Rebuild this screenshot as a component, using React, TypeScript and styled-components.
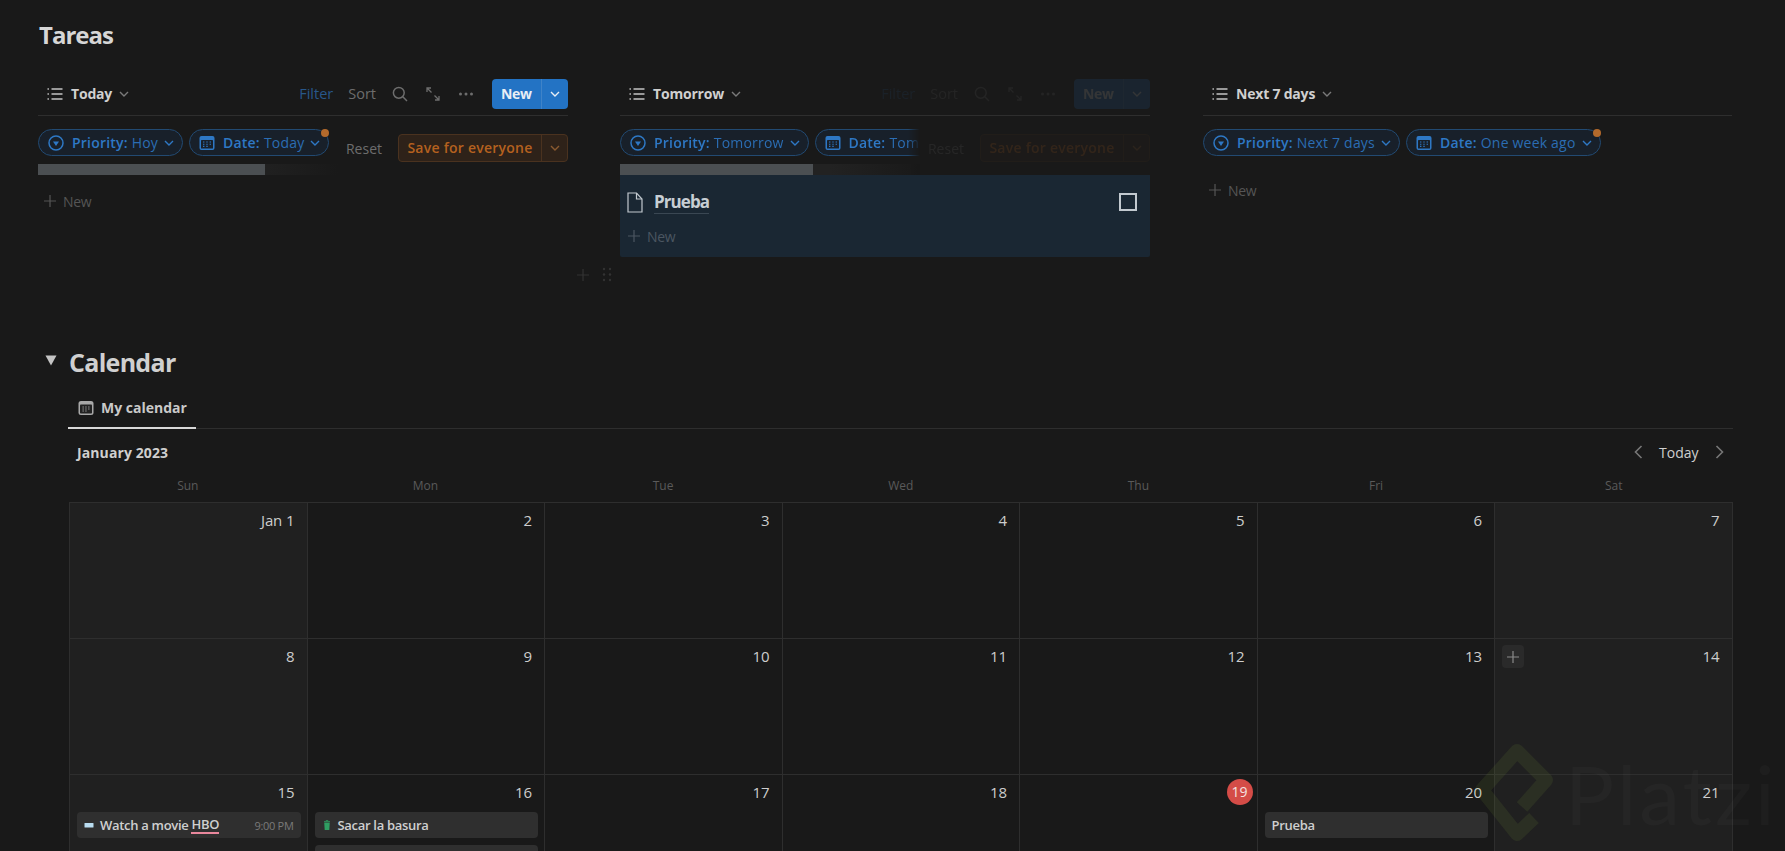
import React from 'react';
import styled, { createGlobalStyle } from 'styled-components';

const GlobalStyle = createGlobalStyle`
  html, body {
    margin: 0;
    padding: 0;
    height: 851px;
    overflow: hidden;
    background: #191919;
    color: #d4d4d4;
    font-family: "Open Sans", "Noto Sans", "Liberation Sans", sans-serif;
  }
  * { box-sizing: border-box; }
`;

const Page = styled.div`
  position: relative;
  width: 1785px;
  height: 851px;
  overflow: hidden;
  padding: 0 51px 0 38px;
`;

const Title = styled.h1`
  margin: 0 0 0 1px;
  height: 79px;
  padding-top: 18px;
  font-size: 24px;
  line-height: 34px;
  font-weight: 700;
  letter-spacing: -1px;
  color: #d6d6d6;
`;

// ---- list views ----

const Columns = styled.div`
  position: relative;
  display: grid;
  grid-template-columns: repeat(3, 530px);
  column-gap: 52px;
  height: 263px;
`;

const Column = styled.section`
  min-width: 0;

  &:nth-child(3) {
    margin-left: 1px;
  }
`;

const ViewBar = styled.div`
  display: flex;
  align-items: center;
  height: 37px;
  padding: 0 0 7px 9px;
  border-bottom: 1px solid #2e2e2e;
`;

const ViewName = styled.span`
  margin-left: 8px;
  font-size: 14px;
  font-weight: 700;
  letter-spacing: -0.2px;
  color: #d0d0d0;
`;

const ViewChevron = styled.svg`
  margin-left: 7px;
  width: 10px;
  height: 6px;
`;

const Tools = styled.div<{ $faded?: boolean }>`
  margin-left: auto;
  display: flex;
  align-items: center;
  opacity: ${p => (p.$faded ? 0.13 : 1)};
`;

const ToolText = styled.span<{ $blue?: boolean }>`
  font-size: 14.5px;
  margin-right: ${p => (p.$blue ? 15 : 16)}px;
  color: ${p => (p.$blue ? '#28578a' : '#6d6d6d')};
`;

const ToolIcon = styled.svg`
  width: 16px;
  height: 16px;
  margin-right: 17px;
  flex: none;
`;

const SplitButton = styled.div`
  display: flex;
  width: 76px;
  height: 30px;
  margin-left: 1px;
  border-radius: 4px;
  background: #2373c4;
  overflow: hidden;
`;

const SplitLabel = styled.span`
  width: 49.5px;
  text-align: center;
  line-height: 30px;
  font-size: 14px;
  font-weight: 700;
  letter-spacing: -0.3px;
  color: #e8eef5;
  border-right: 1px solid #3f83c8;
`;

const SplitArrow = styled.span`
  flex: 1;
  display: flex;
  align-items: center;
  justify-content: center;
`;

const FilterRow = styled.div`
  display: flex;
  align-items: flex-start;
  height: 59px;
`;

const FilterBlock = styled.div<{ $clip?: boolean }>`
  position: relative;
  width: ${p => (p.$clip ? '300px' : 'auto')};
  flex: none;
  ${p =>
    p.$clip
      ? 'overflow: hidden; mask-image: linear-gradient(90deg, #000 96%, transparent);'
      : ''}
`;

const Chips = styled.div`
  display: flex;
  gap: 6px;
  height: 48px;
  padding-top: 13px;
  white-space: nowrap;
`;

const Chip = styled.span`
  position: relative;
  display: inline-flex;
  align-items: center;
  flex: none;
  height: 27px;
  padding: 0 8px 0 9px;
  border: 1px solid #224a72;
  border-radius: 14px;
  background: #18202a;
  font-size: 14px;
  letter-spacing: 0.2px;
  color: #2b6db3;
`;

const ChipIcon = styled.svg`
  width: 16px;
  height: 16px;
  margin-right: 8px;
  flex: none;
`;

const ChipKey = styled.b`
  font-weight: 600;
  margin-right: 4px;
  color: #2e78c5;
`;

const ChipChevron = styled.svg`
  width: 10px;
  height: 6px;
  margin-left: 6px;
  flex: none;
`;

const Dot = styled.i`
  position: absolute;
  top: -1px;
  right: -1px;
  width: 8px;
  height: 8px;
  border-radius: 50%;
  background: #b36a2c;
`;

const Track = styled.div`
  width: 300px;
  height: 11px;
  background: linear-gradient(90deg, #222 70%, #191919);
`;

const Thumb = styled.div`
  height: 100%;
  background: #4b4f52;
`;

const Overlay = styled.div<{ $faded?: boolean }>`
  margin-left: auto;
  margin-top: 18px;
  display: flex;
  align-items: center;
  opacity: ${p => (p.$faded ? 0.16 : 1)};
`;

const ResetLabel = styled.span`
  font-size: 14px;
  color: #6d6d6d;
  margin-right: 16px;
`;

const SaveButton = styled.div`
  display: flex;
  width: 170px;
  height: 28px;
  border: 1px solid #4a321f;
  border-radius: 4px;
  background: #2e2219;
  color: #b5611f;
`;

const SaveLabel = styled.span`
  width: 143px;
  text-align: center;
  line-height: 26px;
  font-size: 14px;
  font-weight: 600;
  letter-spacing: 0.25px;
  border-right: 1px solid #4a321f;
  white-space: nowrap;
`;

const NewRow = styled.div<{ $top: number }>`
  display: flex;
  align-items: center;
  height: 30px;
  margin-top: ${p => p.$top}px;
  padding-left: 5px;
  font-size: 14px;
  letter-spacing: -0.3px;
  color: #555;
`;

const NewPlus = styled.svg`
  width: 14px;
  height: 14px;
  margin-right: 6px;
`;

const GroupPanel = styled.div`
  height: 82px;
  background: #1a2733;
  border-radius: 0 0 2px 2px;
`;

const RowItem = styled.div`
  display: flex;
  align-items: center;
  height: 47px;
  padding: 7px 13px 0 7px;
`;

const DocIcon = styled.svg`
  width: 16px;
  height: 21px;
  margin-right: 11px;
`;

const RowTitle = styled.span`
  font-size: 17px;
  font-weight: 700;
  letter-spacing: -0.9px;
  color: #c7ced4;
  border-bottom: 1px solid #3a4753;
  line-height: 22px;
`;

const CheckBox = styled.span`
  margin-left: auto;
  width: 18px;
  height: 18px;
  border: 2px solid #c2c9cf;
`;

const PanelNew = styled(NewRow)`
  padding-left: 7px;
  height: 26px;
  color: #4b5661;
`;

const BlockTools = styled.div`
  position: absolute;
  left: 538px;
  top: 188px;
  display: flex;
  align-items: center;
  gap: 12px;
`;

// ---- calendar ----

const Heading = styled.div`
  display: flex;
  align-items: center;
  height: 40px;
  padding-left: 7px;
`;

const Triangle = styled.svg`
  width: 12px;
  height: 11px;
  margin-right: 12px;
  margin-top: -3px;
`;

const HeadingText = styled.h2`
  margin: 0;
  font-size: 25px;
  font-weight: 700;
  letter-spacing: -0.7px;
  color: #d0d0d0;
`;

const CalendarBody = styled.div`
  width: 1663.5px;
  margin-left: 31px;
`;

const Tabs = styled.div`
  height: 47px;
  border-bottom: 1px solid #2e2e2e;
`;

const Tab = styled.div`
  display: inline-flex;
  align-items: center;
  height: 47px;
  width: 128px;
  margin-left: -1px;
  padding: 6px 0 0 10px;
  border-bottom: 2px solid #d8d8d8;
  font-size: 14px;
  font-weight: 700;
  color: #c9c9c9;
`;

const TabIcon = styled.svg`
  width: 16px;
  height: 16px;
  margin-right: 7px;
`;

const MonthBar = styled.div`
  display: flex;
  align-items: center;
  height: 46px;
  padding-left: 8px;
`;

const MonthName = styled.span`
  font-size: 14px;
  font-weight: 700;
  letter-spacing: 0.1px;
  color: #cfcfcf;
`;

const MonthNav = styled.div`
  margin-left: auto;
  display: flex;
  align-items: center;
  gap: 16px;
  padding-right: 9px;
  font-size: 14px;
  color: #cfcfcf;
`;

const NavArrow = styled.svg`
  width: 9px;
  height: 14px;
`;

const WeekRow = styled.div`
  display: grid;
  grid-template-columns: repeat(7, 1fr);
  height: 27px;
  padding-top: 1px;
  line-height: 20px;
  font-size: 12px;
  text-align: center;
  color: #5a5a5a;
`;

const MonthGrid = styled.div`
  display: grid;
  grid-template-columns: repeat(7, 1fr);
  grid-auto-rows: 136px;
  border-top: 1px solid #2e2e2e;
  border-left: 1px solid #2e2e2e;
`;

const DayCell = styled.div<{ $weekend: boolean }>`
  position: relative;
  min-width: 0;
  padding: 0 6px 0 7px;
  border-right: 1px solid #2e2e2e;
  border-bottom: 1px solid #2e2e2e;
  background: ${p => (p.$weekend ? '#202020' : '#191919')};
`;

const DayNumber = styled.div`
  display: flex;
  align-items: center;
  justify-content: flex-end;
  height: 34px;
  margin-bottom: 3px;
  padding-right: 6px;
  font-size: 15px;
  letter-spacing: -0.1px;
  color: #cdcdcd;
`;

const TodayBadge = styled.span`
  width: 26px;
  height: 26px;
  margin-right: -8px;
  border-radius: 50%;
  background: #d44c47;
  color: #f4e3e2;
  font-size: 14px;
  line-height: 26px;
  text-align: center;
`;

const AddButton = styled.span`
  position: absolute;
  top: 6px;
  left: 7px;
  display: flex;
  align-items: center;
  justify-content: center;
  width: 22px;
  height: 23px;
  border-radius: 4px;
  background: #2a2a2a;
`;

const EventCard = styled.div`
  display: flex;
  align-items: center;
  height: 26px;
  margin-bottom: 7px;
  padding: 0 7px;
  border-radius: 4px;
  background: #2f2f2f;
  font-size: 13px;
  font-weight: 600;
  letter-spacing: -0.3px;
  color: #cfcfcf;
  white-space: nowrap;
`;

const EventIcon = styled.svg`
  width: 10px;
  height: 12px;
  margin-right: 6px;
  flex: none;
`;

const Mention = styled.span`
  margin-left: 3px;
  border-bottom: 2px solid #e8879c;
  line-height: 15px;
`;

const EventTime = styled.span`
  margin-left: auto;
  font-size: 11px;
  font-weight: 400;
  color: #7a7a7a;
`;

// ---- watermark ----

const Watermark = styled.div`
  position: absolute;
  left: 1475px;
  top: 743px;
  display: flex;
  pointer-events: none;
`;

const WatermarkLogo = styled.svg`
  width: 78px;
  height: 100px;
  flex: none;
`;

const WatermarkText = styled.span`
  margin-left: 12px;
  font-size: 82px;
  line-height: 100px;
  font-family: "Lato", "Open Sans", sans-serif;
  font-weight: 400;
  letter-spacing: 3px;
  color: rgba(255, 255, 255, 0.022);
`;

// ---- icons ----

const ListGlyph = () => (
  <svg width="16" height="14" viewBox="0 0 16 14" fill="none" stroke="#c4c4c4" strokeWidth="1.3">
    <path d="M4.5 2h11M4.5 7h11M4.5 12h11" />
    <path d="M.5 2h1.4M.5 7h1.4M.5 12h1.4" strokeWidth="1.6" />
  </svg>
);

const Chevron = ({ color = '#7a7a7a' }: { color?: string }) => (
  <path d="M1 1l4 4 4-4" fill="none" stroke={color} strokeWidth="1.4" />
);

const PriorityGlyph = () => (
  <ChipIcon viewBox="0 0 16 16">
    <circle cx="8" cy="8" r="7" fill="none" stroke="#2e78c5" strokeWidth="1.5" />
    <path d="M5 6.5h6L8 11z" fill="#2e78c5" />
  </ChipIcon>
);

const CalendarGlyph = () => (
  <ChipIcon viewBox="0 0 16 16">
    <rect x="0.5" y="1" width="15" height="14" rx="2" fill="#2e78c5" />
    <rect x="2" y="5" width="12" height="8.5" rx="0.6" fill="#18202a" />
    <path d="M4 7h1.4M7.3 7h1.4M10.6 7h1.4M4 9.2h1.4M7.3 9.2h1.4M10.6 9.2h1.4M7.3 11.4h1.4M4 11.4h1.4" stroke="#2e78c5" strokeWidth="1.1" />
  </ChipIcon>
);

const PlusGlyph = ({ color }: { color: string }) => (
  <path d="M7 1v12M1 7h12" stroke={color} strokeWidth="1.2" fill="none" />
);

const toolColor = '#6d6d6d';

type Chip = { key: string; value: string; icon: 'priority' | 'date'; dot?: boolean };

type View = {
  name: string;
  chips: Chip[];
  fadedTools?: boolean;
  save?: 'on' | 'faded';
  thumb?: number;
  clip?: boolean;
};

const views: View[] = [
  {
    name: 'Today',
    chips: [
      { key: 'Priority:', value: 'Hoy', icon: 'priority' },
      { key: 'Date:', value: 'Today', icon: 'date', dot: true },
    ],
    save: 'on',
    thumb: 227,
  },
  {
    name: 'Tomorrow',
    chips: [
      { key: 'Priority:', value: 'Tomorrow', icon: 'priority' },
      { key: 'Date:', value: 'Tomorrow', icon: 'date' },
    ],
    fadedTools: true,
    save: 'faded',
    thumb: 193,
    clip: true,
  },
  {
    name: 'Next 7 days',
    chips: [
      { key: 'Priority:', value: 'Next 7 days', icon: 'priority' },
      { key: 'Date:', value: 'One week ago', icon: 'date', dot: true },
    ],
  },
];

const ViewColumn: React.FC<{ view: View }> = ({ view }) => (
  <Column>
    <ViewBar>
      <ListGlyph />
      <ViewName>{view.name}</ViewName>
      <ViewChevron viewBox="0 0 10 6"><Chevron /></ViewChevron>
      {view.save && (
        <Tools $faded={view.fadedTools}>
          <ToolText $blue>Filter</ToolText>
          <ToolText>Sort</ToolText>
          <ToolIcon viewBox="0 0 16 16" fill="none" stroke={toolColor} strokeWidth="1.5">
            <circle cx="6.8" cy="6.8" r="5.4" />
            <path d="M10.8 10.8l4.2 4.2" />
          </ToolIcon>
          <ToolIcon viewBox="0 0 16 16" fill="none" stroke={toolColor} strokeWidth="1.3">
            <path d="M2 2l4.5 4.5M2 6V2h4M14 14L9.5 9.5M14 10v4h-4" />
          </ToolIcon>
          <ToolIcon viewBox="0 0 16 16" fill={toolColor}>
            <circle cx="2.5" cy="8" r="1.5" />
            <circle cx="8" cy="8" r="1.5" />
            <circle cx="13.5" cy="8" r="1.5" />
          </ToolIcon>
          <SplitButton>
            <SplitLabel>New</SplitLabel>
            <SplitArrow>
              <svg width="10" height="6" viewBox="0 0 10 6"><Chevron color="#e8eef5" /></svg>
            </SplitArrow>
          </SplitButton>
        </Tools>
      )}
    </ViewBar>
    <FilterRow>
      <FilterBlock $clip={view.clip}>
        <Chips>
          {view.chips.map(chip => (
            <Chip key={chip.key}>
              {chip.icon === 'priority' ? <PriorityGlyph /> : <CalendarGlyph />}
              <ChipKey>{chip.key}</ChipKey>
              {chip.value}
              <ChipChevron viewBox="0 0 10 6"><Chevron color="#2e78c5" /></ChipChevron>
              {chip.dot && <Dot />}
            </Chip>
          ))}
        </Chips>
        {view.thumb && (
          <Track>
            <Thumb style={{ width: view.thumb }} />
          </Track>
        )}
      </FilterBlock>
      {view.save && (
        <Overlay $faded={view.save === 'faded'}>
          <ResetLabel>Reset</ResetLabel>
          <SaveButton>
            <SaveLabel>Save for everyone</SaveLabel>
            <SplitArrow>
              <svg width="10" height="6" viewBox="0 0 10 6"><Chevron color="#8a5a30" /></svg>
            </SplitArrow>
          </SaveButton>
        </Overlay>
      )}
    </FilterRow>
    {view.clip ? (
      <GroupPanel>
        <RowItem>
          <DocIcon viewBox="0 0 16 21" fill="none" stroke="#c2c9cf" strokeWidth="1.2">
            <path d="M1 1h8.5L15 7v13H1z" />
            <path d="M9.5 1v6H15" />
          </DocIcon>
          <RowTitle>Prueba</RowTitle>
          <CheckBox />
        </RowItem>
        <PanelNew $top={1}>
          <NewPlus viewBox="0 0 14 14"><PlusGlyph color="#4b5661" /></NewPlus>
          New
        </PanelNew>
      </GroupPanel>
    ) : (
      <NewRow $top={view.thumb ? 11 : 0}>
        <NewPlus viewBox="0 0 14 14"><PlusGlyph color="#555" /></NewPlus>
        New
      </NewRow>
    )}
  </Column>
);

type CalEvent = { title?: string; mention?: string; time?: string; icon?: 'ticket' | 'trash' };

const events: Record<number, CalEvent[]> = {
  15: [{ title: 'Watch a movie', mention: 'HBO', time: '9:00 PM', icon: 'ticket' }],
  16: [{ title: 'Sacar la basura', icon: 'trash' }, {}],
  20: [{ title: 'Prueba' }],
};

const weekdays = ['Sun', 'Mon', 'Tue', 'Wed', 'Thu', 'Fri', 'Sat'];
const days = Array.from({ length: 21 }, (_, i) => i + 1);

const EventItem: React.FC<{ event: CalEvent }> = ({ event }) => (
  <EventCard>
    {event.icon === 'ticket' && (
      <EventIcon viewBox="0 0 10 12"><rect x="0.5" y="4" width="9" height="4.5" rx="0.6" fill="#b9dcf0" /></EventIcon>
    )}
    {event.icon === 'trash' && (
      <EventIcon viewBox="0 0 10 12">
        <path d="M2.2 3.4h5.6l-.5 7.6H2.7zM2 2.2h6v.7H2zM3.8 1.2h2.4v.8H3.8z" fill="#2f9e62" />
      </EventIcon>
    )}
    {event.title}
    {event.mention && <Mention>{event.mention}</Mention>}
    {event.time && <EventTime>{event.time}</EventTime>}
  </EventCard>
);

const App: React.FC = () => (
  <Page>
    <GlobalStyle />
    <Title>Tareas</Title>

    <Columns>
      {views.map(view => <ViewColumn key={view.name} view={view} />)}
      <BlockTools>
        <svg width="14" height="14" viewBox="0 0 14 14"><PlusGlyph color="#333" /></svg>
        <svg width="10" height="15" viewBox="0 0 10 15" fill="#333">
          <circle cx="2" cy="2" r="1.2" /><circle cx="8" cy="2" r="1.2" />
          <circle cx="2" cy="7.5" r="1.2" /><circle cx="8" cy="7.5" r="1.2" />
          <circle cx="2" cy="13" r="1.2" /><circle cx="8" cy="13" r="1.2" />
        </svg>
      </BlockTools>
    </Columns>

    <Heading>
      <Triangle viewBox="0 0 12 11"><path d="M0.5 0.5h11L6 10.5z" fill="#c4c4c4" /></Triangle>
      <HeadingText>Calendar</HeadingText>
    </Heading>

    <CalendarBody>
      <Tabs>
        <Tab>
          <TabIcon viewBox="0 0 16 16">
            <rect x="0.5" y="1" width="15" height="14" rx="2.5" fill="#a8a8a8" />
            <rect x="2" y="4.5" width="12" height="9" rx="0.8" fill="#222" />
            <path d="M4.5 7h1.3M7.3 7h1.3M10.2 7h1.3M4.5 9h1.3M7.3 9h1.3M10.2 9h1.3M4.5 11h1.3M7.3 11h1.3" stroke="#a8a8a8" strokeWidth="1" />
          </TabIcon>
          My calendar
        </Tab>
      </Tabs>
      <MonthBar>
        <MonthName>January 2023</MonthName>
        <MonthNav>
          <NavArrow viewBox="0 0 9 14"><path d="M7.5 1L1.5 7l6 6" fill="none" stroke="#777" strokeWidth="1.6" /></NavArrow>
          Today
          <NavArrow viewBox="0 0 9 14"><path d="M1.5 1l6 6-6 6" fill="none" stroke="#777" strokeWidth="1.6" /></NavArrow>
        </MonthNav>
      </MonthBar>
      <WeekRow>
        {weekdays.map(day => <span key={day}>{day}</span>)}
      </WeekRow>
      <MonthGrid>
        {days.map(day => (
          <DayCell key={day} $weekend={day % 7 === 1 || day % 7 === 0}>
            <DayNumber>
              {day === 19 ? <TodayBadge>19</TodayBadge> : day === 1 ? 'Jan 1' : day}
            </DayNumber>
            {(events[day] || []).map((event, i) => <EventItem key={i} event={event} />)}
            {day === 14 && (
              <AddButton>
                <svg width="14" height="14" viewBox="0 0 14 14"><PlusGlyph color="#8a8a8a" /></svg>
              </AddButton>
            )}
          </DayCell>
        ))}
      </MonthGrid>
    </CalendarBody>

    <Watermark>
      <WatermarkLogo viewBox="0 0 78 100">
        <path d="M47 64L71 37 42 8 7 47l35 44 17-16" fill="none" stroke="#98ca3f" strokeOpacity="0.09" strokeWidth="14" strokeLinejoin="round" />
      </WatermarkLogo>
      <WatermarkText>Platzi</WatermarkText>
    </Watermark>
  </Page>
);

export default App;
